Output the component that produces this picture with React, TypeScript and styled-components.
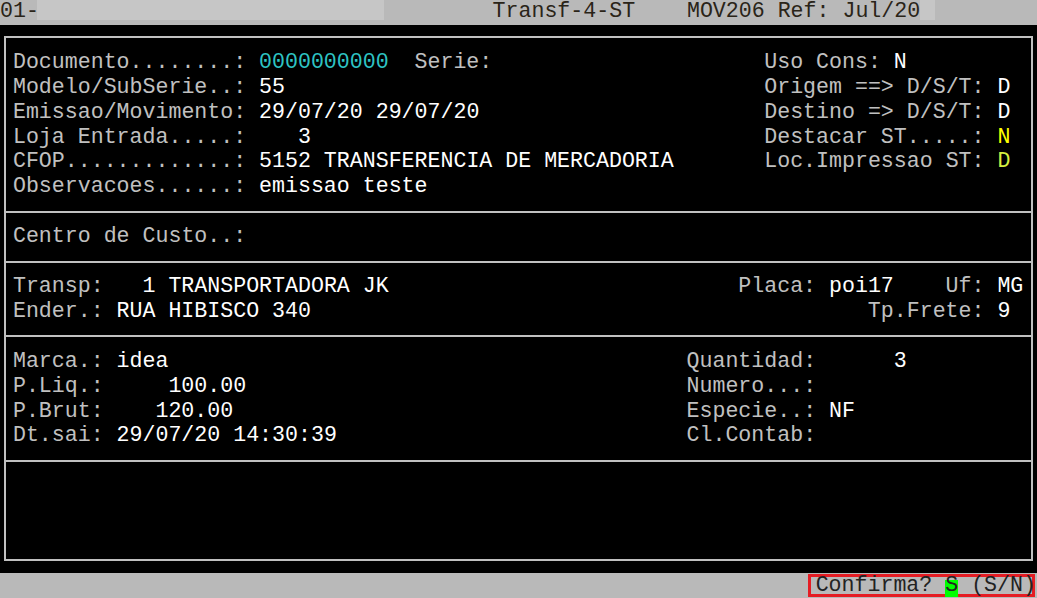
import React from 'react'
import styled, { createGlobalStyle } from 'styled-components'

// terminal grid: 80 x 24 cells in a 1037 x 598 window
const ROW = 598 / 24
const COL = 1037 / 80
const FONT = '"Liberation Mono", "Courier New", monospace'

type Tone = 'label' | 'value' | 'cyan' | 'yellow' | 'lime'

const TONES: Record<Tone, string> = {
    label: '#c0c0c0',
    value: '#ffffff',
    cyan: '#2ec4c4',
    yellow: '#ffff00',
    lime: '#d4f040',
}

interface Seg {
    col: number
    text: string
    tone: Tone
}

type Line = Seg[]

const SECTIONS: Line[][] = [
    [
        [
            { col: 1, text: 'Documento........:', tone: 'label' },
            { col: 20, text: '0000000000', tone: 'cyan' },
            { col: 32, text: 'Serie:', tone: 'label' },
            { col: 59, text: 'Uso Cons:', tone: 'label' },
            { col: 69, text: 'N', tone: 'value' },
        ],
        [
            { col: 1, text: 'Modelo/SubSerie..:', tone: 'label' },
            { col: 20, text: '55', tone: 'value' },
            { col: 59, text: 'Origem ==> D/S/T:', tone: 'label' },
            { col: 77, text: 'D', tone: 'value' },
        ],
        [
            { col: 1, text: 'Emissao/Movimento:', tone: 'label' },
            { col: 20, text: '29/07/20 29/07/20', tone: 'value' },
            { col: 59, text: 'Destino => D/S/T:', tone: 'label' },
            { col: 77, text: 'D', tone: 'value' },
        ],
        [
            { col: 1, text: 'Loja Entrada.....:', tone: 'label' },
            { col: 23, text: '3', tone: 'value' },
            { col: 59, text: 'Destacar ST.....:', tone: 'label' },
            { col: 77, text: 'N', tone: 'yellow' },
        ],
        [
            { col: 1, text: 'CFOP.............:', tone: 'label' },
            { col: 20, text: '5152 TRANSFERENCIA DE MERCADORIA', tone: 'value' },
            { col: 59, text: 'Loc.Impressao ST:', tone: 'label' },
            { col: 77, text: 'D', tone: 'lime' },
        ],
        [
            { col: 1, text: 'Observacoes......:', tone: 'label' },
            { col: 20, text: 'emissao teste', tone: 'value' },
        ],
    ],
    [[{ col: 1, text: 'Centro de Custo..:', tone: 'label' }]],
    [
        [
            { col: 1, text: 'Transp:', tone: 'label' },
            { col: 11, text: '1 TRANSPORTADORA JK', tone: 'value' },
            { col: 57, text: 'Placa:', tone: 'label' },
            { col: 64, text: 'poi17', tone: 'value' },
            { col: 73, text: 'Uf:', tone: 'label' },
            { col: 77, text: 'MG', tone: 'value' },
        ],
        [
            { col: 1, text: 'Ender.:', tone: 'label' },
            { col: 9, text: 'RUA HIBISCO 340', tone: 'value' },
            { col: 67, text: 'Tp.Frete:', tone: 'label' },
            { col: 77, text: '9', tone: 'value' },
        ],
    ],
    [
        [
            { col: 1, text: 'Marca.:', tone: 'label' },
            { col: 9, text: 'idea', tone: 'value' },
            { col: 53, text: 'Quantidad:', tone: 'label' },
            { col: 69, text: '3', tone: 'value' },
        ],
        [
            { col: 1, text: 'P.Liq.:', tone: 'label' },
            { col: 13, text: '100.00', tone: 'value' },
            { col: 53, text: 'Numero...:', tone: 'label' },
        ],
        [
            { col: 1, text: 'P.Brut:', tone: 'label' },
            { col: 12, text: '120.00', tone: 'value' },
            { col: 53, text: 'Especie..:', tone: 'label' },
            { col: 64, text: 'NF', tone: 'value' },
        ],
        [
            { col: 1, text: 'Dt.sai:', tone: 'label' },
            { col: 9, text: '29/07/20 14:30:39', tone: 'value' },
            { col: 53, text: 'Cl.Contab:', tone: 'label' },
        ],
    ],
    [[], [], []],
]

const App: React.FC = () => {
    return (
        <>
            <GlobalStyle />
            <Screen>
                <TopBar>
                    <BarCode>01-</BarCode>
                    <InputBand $width={347} />
                    <BarTitle>{'Transf-4-ST    MOV206 Ref: Jul/20'}</BarTitle>
                    <InputBand $width={15} />
                </TopBar>
                <Body>
                    <Frame>
                        {SECTIONS.map((lines, i) => (
                            <Section key={i}>
                                {lines.map((line, j) => (
                                    <Row key={j}>
                                        {line.map((seg) => (
                                            <Cell
                                                key={seg.col}
                                                $col={seg.col}
                                                $span={seg.text.length}
                                                $tone={seg.tone}
                                            >
                                                {seg.text}
                                            </Cell>
                                        ))}
                                    </Row>
                                ))}
                            </Section>
                        ))}
                    </Frame>
                </Body>
                <BottomBar>
                    <RedMark />
                    <Prompt>
                        {'Confirma? '}
                        <Highlight>S</Highlight>
                        {' (S/N)'}
                    </Prompt>
                </BottomBar>
            </Screen>
        </>
    )
}

const GlobalStyle = createGlobalStyle`
    html, body {
        margin: 0;
        padding: 0;
        background: #000;
    }
    body {
        font-family: ${FONT};
        font-size: 21.6px;
        overflow: hidden;
    }
`

const Screen = styled.div`
    width: 1037px;
    height: 598px;
    display: flex;
    flex-direction: column;
    background: #000;
    overflow: hidden;
`

const TopBar = styled.div`
    height: ${ROW}px;
    flex: none;
    display: flex;
    align-items: flex-start;
    background: #b9b9b9;
    color: #2a2418;
    line-height: ${ROW}px;
    white-space: pre;
`

const BarCode = styled.span`
    width: 37px;
    overflow: visible;
    margin-top: -1px;
`

const InputBand = styled.div<{ $width: number }>`
    width: ${(p) => p.$width}px;
    height: 20px;
    background: #c6c6c6;
`

const BarTitle = styled.span`
    margin-left: ${38 * COL - 384}px;
    margin-top: -1px;
`

const Body = styled.div`
    height: ${22 * ROW}px;
    flex: none;
    padding: ${ROW / 2 - 1}px 4px 0 4px;
    box-sizing: border-box;
`

const Frame = styled.div`
    border: 2px solid #c0c0c0;
    display: flex;
    flex-direction: column;
`

const Section = styled.div`
    padding: ${ROW / 2 - 1}px 0 ${ROW / 2 - 1}px ${COL - 6}px;

    & + & {
        border-top: 2px solid #c0c0c0;
    }
`

const Row = styled.div`
    display: grid;
    grid-template-columns: repeat(78, ${COL}px);
    height: ${ROW}px;
    line-height: ${ROW}px;
`

const Cell = styled.span<{ $col: number; $span: number; $tone: Tone }>`
    grid-row: 1;
    grid-column: ${(p) => p.$col} / span ${(p) => p.$span};
    white-space: pre;
    color: ${(p) => TONES[p.$tone]};
`

const BottomBar = styled.div`
    position: relative;
    height: ${ROW}px;
    flex: none;
    background: #b9b9b9;
    color: #222;
    line-height: ${ROW}px;
    padding-left: ${63 * COL - 1}px;
    white-space: pre;
`

const Prompt = styled.span`
    position: relative;
    z-index: 1;
`

const Highlight = styled.span`
    background: linear-gradient(to bottom, transparent 7px, #00ff00 7px);
`

const RedMark = styled.div`
    position: absolute;
    left: 808px;
    right: 2px;
    top: 1px;
    bottom: 1px;
    border: 3px solid #e51c23;
`

export default App
